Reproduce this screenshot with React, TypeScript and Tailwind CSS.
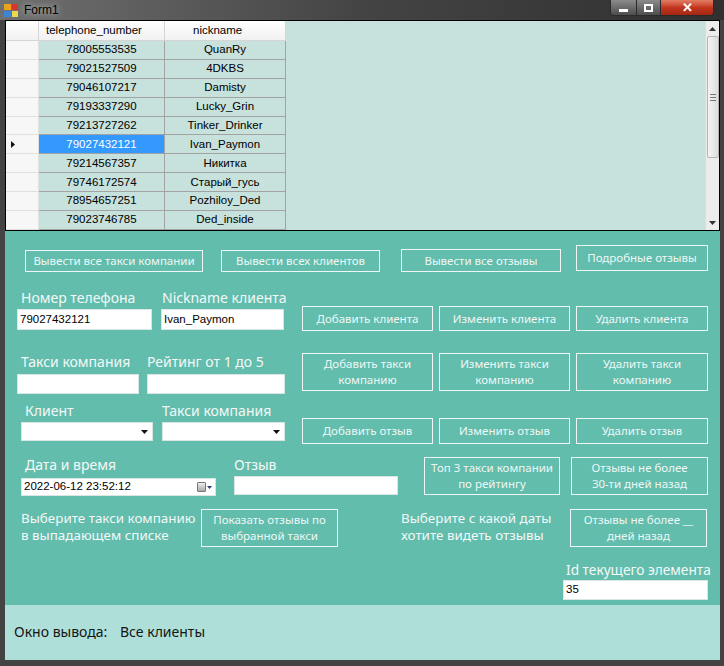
import React from "react";

const rows: [string, string][] = [
  ["78005553535", "QuanRy"],
  ["79021527509", "4DKBS"],
  ["79046107217", "Damisty"],
  ["79193337290", "Lucky_Grin"],
  ["79213727262", "Tinker_Drinker"],
  ["79027432121", "Ivan_Paymon"],
  ["79214567357", "Никитка"],
  ["79746172574", "Старый_гусь"],
  ["78954657251", "Pozhiloy_Ded"],
  ["79023746785", "Ded_inside"],
];

const SELECTED = 5;

const labelBase = "text-[#f4f8f7] whitespace-nowrap [font-family:'Noto_Sans',sans-serif]";
const label = `${labelBase} text-[14px] leading-[18px]`;
const box = "bg-white border border-[#d9e6e3] text-[11.5px] leading-none text-black [font-family:'Liberation_Sans',Arial,sans-serif] flex items-center px-[2px]";

const Btn = ({ w, h, children }: { w: number; h: number; children: React.ReactNode }) => (
  <div
    className="border border-[#eef7f5] flex items-center justify-center text-center text-[11.5px] leading-[16px] text-[#eef7f5] [font-family:'Noto_Sans',sans-serif] shrink-0"
    style={{ width: w, height: h }}
  >
    <span>{children}</span>
  </div>
);

const Combo = ({ w }: { w: number }) => (
  <div className={`${box} h-[19px] justify-end pr-[4px]`} style={{ width: w }}>
    <svg width="7" height="4" viewBox="0 0 7 4">
      <path d="M0 0h7L3.5 4z" fill="#111" />
    </svg>
  </div>
);

export default function App() {
  return (
    <div className="w-[724px] h-[666px] bg-[#434343] flex flex-col overflow-hidden">
      {/* title bar */}
      <div className="h-[20px] flex items-center relative bg-gradient-to-r from-[#707070] via-[#444444] to-[#303030]">
        <div className="ml-[4px] w-[14px] h-[13px] grid grid-cols-2 gap-[1px]">
          <div className="bg-[#e8a21c]" />
          <div className="bg-[#d9352a]" />
          <div className="bg-[#3d86d6]" />
          <div className="bg-[#e8d84a]" />
        </div>
        <span className="ml-[6px] text-[12px] text-black [font-family:'Liberation_Sans',Arial,sans-serif] [text-shadow:0_0_6px_#ddd]">Form1</span>
        <div className="absolute right-[10px] top-0 flex h-[16px] rounded-b-[4px] overflow-hidden border border-t-0 border-[#2a2a2a]">
          <div className="w-[26px] bg-gradient-to-b from-[#8b8b8b] to-[#4e4e4e] flex items-center justify-center border-r border-[#2a2a2a]">
            <div className="w-[9px] h-[3px] bg-white mt-[5px]" />
          </div>
          <div className="w-[24px] bg-gradient-to-b from-[#8b8b8b] to-[#4e4e4e] flex items-center justify-center border-r border-[#2a2a2a]">
            <div className="w-[9px] h-[8px] border-2 border-white" />
          </div>
          <div className="w-[52px] bg-gradient-to-b from-[#e27c64] via-[#c5351d] to-[#a32713] flex items-center justify-center text-white text-[13px] font-bold leading-none [font-family:'Liberation_Sans',Arial,sans-serif]">
            ✕
          </div>
        </div>
      </div>

      <div className="flex-1 ml-[5px] mr-[4px] flex flex-col">
        {/* data grid */}
        <div className="h-[211px] border border-black bg-[#c7e1dc] flex text-[11.5px] text-black [font-family:'Liberation_Sans',Arial,sans-serif]">
          <div className="flex-1 flex flex-col">
            <div className="flex h-[20px]">
              <div className="w-[33px] bg-gradient-to-b from-white to-[#f1f1f1] border-r border-b border-[#d5d5d5]" />
              <div className="w-[126px] bg-gradient-to-b from-white to-[#f1f1f1] border-r border-b border-[#d5d5d5] flex items-center pl-[7px]">telephone_number</div>
              <div className="w-[121px] bg-gradient-to-b from-white to-[#f1f1f1] border-r border-b border-[#d5d5d5] flex items-center pl-[28px]">nickname</div>
            </div>
            {rows.map(([phone, nick], i) => (
              <div key={phone} className="flex h-[19px]">
                <div className="w-[33px] bg-[#f7f7f7] border-r border-b border-[#e0e0e0] flex items-center pl-[5px]">
                  {i === SELECTED && (
                    <svg width="4" height="7" viewBox="0 0 4 7">
                      <path d="M0 0l4 3.5L0 7z" fill="#111" />
                    </svg>
                  )}
                </div>
                <div
                  className={`w-[126px] border-r border-b border-[#a3a3a3] flex items-center justify-center ${
                    i === SELECTED ? "bg-[#3399ff] text-white" : ""
                  }`}
                >
                  {phone}
                </div>
                <div className="w-[121px] border-r border-b border-[#a3a3a3] flex items-center justify-center">{nick}</div>
              </div>
            ))}
          </div>
          {/* scrollbar */}
          <div className="w-[14px] bg-[#ececec] flex flex-col items-center border-l border-[#dcdcdc]">
            <div className="h-[15px] flex items-center justify-center">
              <svg width="7" height="4" viewBox="0 0 7 4">
                <path d="M3.5 0L7 4H0z" fill="#333" />
              </svg>
            </div>
            <div className="w-[12px] h-[122px] rounded-[2px] border border-[#b5b5b5] bg-gradient-to-r from-[#f4f4f4] to-[#dcdcdc] flex flex-col items-center justify-center gap-[2px]">
              <div className="w-[6px] h-px bg-[#777]" />
              <div className="w-[6px] h-px bg-[#777]" />
              <div className="w-[6px] h-px bg-[#777]" />
            </div>
            <div className="flex-1" />
            <div className="h-[15px] flex items-center justify-center">
              <svg width="7" height="4" viewBox="0 0 7 4">
                <path d="M0 0h7L3.5 4z" fill="#333" />
              </svg>
            </div>
          </div>
        </div>

        {/* controls panel */}
        <div className="h-[374px] bg-[#62bdad] flex flex-col">
          {/* row A */}
          <div className="flex items-end h-[27px] mt-[14px]">
            <div className="ml-[20px]"><Btn w={178} h={22}>Вывести все такси компании</Btn></div>
            <div className="ml-[18px]"><Btn w={159} h={22}>Вывести всех клиентов</Btn></div>
            <div className="ml-[21px]"><Btn w={160} h={23}>Вывести все отзывы</Btn></div>
            <div className="ml-[15px] self-start"><Btn w={132} h={26}>Подробные отзывы</Btn></div>
          </div>

          {/* row B */}
          <div className="flex items-start mt-[17px]">
            <div className="ml-[12px] w-[135px] flex flex-col">
              <span className={`${label} pl-[4px]`}>Номер телефона</span>
              <div className={`${box} mt-[2px] w-[135px] h-[21px]`}>79027432121</div>
            </div>
            <div className="ml-[9px] w-[123px] flex flex-col">
              <span className={`${label} pl-[1px]`}>Nickname клиента</span>
              <div className={`${box} mt-[2px] w-[123px] h-[21px]`}>Ivan_Paymon</div>
            </div>
            <div className="ml-[18px] mt-[17px] flex gap-[6px]">
              <Btn w={131} h={25}>Добавить клиента</Btn>
              <Btn w={131} h={25}>Изменить клиента</Btn>
              <Btn w={132} h={25}>Удалить клиента</Btn>
            </div>
          </div>

          {/* row C */}
          <div className="flex items-start mt-[22px]">
            <div className="ml-[12px] w-[122px] flex flex-col">
              <span className={`${label} pl-[4px]`}>Такси компания</span>
              <div className={`${box} mt-[3px] w-[122px] h-[20px]`} />
            </div>
            <div className="ml-[8px] w-[138px] flex flex-col">
              <span className={label}>Рейтинг от 1 до 5</span>
              <div className={`${box} mt-[3px] w-[138px] h-[20px]`} />
            </div>
            <div className="ml-[17px] flex gap-[6px]">
              <Btn w={131} h={38}>Добавить такси<br />компанию</Btn>
              <Btn w={131} h={38}>Изменить такси<br />компанию</Btn>
              <Btn w={132} h={38}>Удалить такси<br />компанию</Btn>
            </div>
          </div>

          {/* row D */}
          <div className="flex items-start mt-[8px]">
            <div className="ml-[16px] w-[132px] flex flex-col">
              <span className={`${label} pl-[4px]`}>Клиент</span>
              <div className="mt-[2px]"><Combo w={132} /></div>
            </div>
            <div className="ml-[9px] w-[123px] flex flex-col">
              <span className={label}>Такси компания</span>
              <div className="mt-[2px]"><Combo w={123} /></div>
            </div>
            <div className="ml-[17px] mt-[16px] flex gap-[6px]">
              <Btn w={131} h={26}>Добавить отзыв</Btn>
              <Btn w={131} h={26}>Изменить отзыв</Btn>
              <Btn w={132} h={26}>Удалить отзыв</Btn>
            </div>
          </div>

          {/* row E */}
          <div className="flex items-start mt-[12px]">
            <div className="ml-[16px] w-[195px] flex flex-col">
              <span className={`${label} pl-[4px]`}>Дата и время</span>
              <div className={`${box} mt-[4px] w-[195px] h-[18px] justify-between pr-[3px]`}>
                <span>2022-06-12 23:52:12</span>
                <span className="flex items-center gap-[1px]">
                  <span className="w-[9px] h-[10px] border border-[#777] bg-gradient-to-b from-[#eee] to-[#aaa] rounded-[1px]" />
                  <svg width="5" height="3" viewBox="0 0 5 3">
                    <path d="M0 0h5L2.5 3z" fill="#2d3f6c" />
                  </svg>
                </span>
              </div>
            </div>
            <div className="ml-[18px] w-[164px] flex flex-col">
              <span className={label}>Отзыв</span>
              <div className={`${box} mt-[2px] w-[164px] h-[19px]`} />
            </div>
            <div className="ml-[26px] mt-[1px]"><Btn w={136} h={38}>Топ 3 такси компании<br />по рейтингу</Btn></div>
            <div className="ml-[11px] mt-[1px]"><Btn w={137} h={38}>Отзывы не более<br />30-ти дней назад</Btn></div>
          </div>

          {/* row F */}
          <div className="flex items-start mt-[13px]">
            <div className={`ml-[16px] w-[180px] ${labelBase} text-[13.4px] leading-[17px] pt-[1px]`}>
              Выберите такси компанию<br />в выпадающем списке
            </div>
            <Btn w={137} h={38}>Показать отзывы по<br />выбранной такси</Btn>
            <div className={`ml-[63px] w-[169px] ${labelBase} text-[13.4px] leading-[17px] pt-[1px]`}>
              Выберите с какой даты<br />хотите видеть отзывы
            </div>
            <Btn w={137} h={38}>Отзывы не более __<br />дней назад</Btn>
          </div>

          {/* row G */}
          <div className="flex flex-col items-start ml-[558px] mt-[14px]">
            <span className={`${labelBase} text-[13.7px] leading-[18px] pl-[3px]`}>Id текущего элемента</span>
            <div className={`${box} mt-[1px] w-[145px] h-[20px]`}>35</div>
          </div>
        </div>

        {/* output panel */}
        <div className="h-[55px] bg-[#aee0d9] flex items-center pb-[3px] text-[14px] text-[#151515] [font-family:'Noto_Sans',sans-serif]">
          <span className="ml-[9px] w-[106px]">Окно вывода:</span>
          <span>Все клиенты</span>
        </div>
      </div>
      <div className="h-[6px]" />
    </div>
  );
}
